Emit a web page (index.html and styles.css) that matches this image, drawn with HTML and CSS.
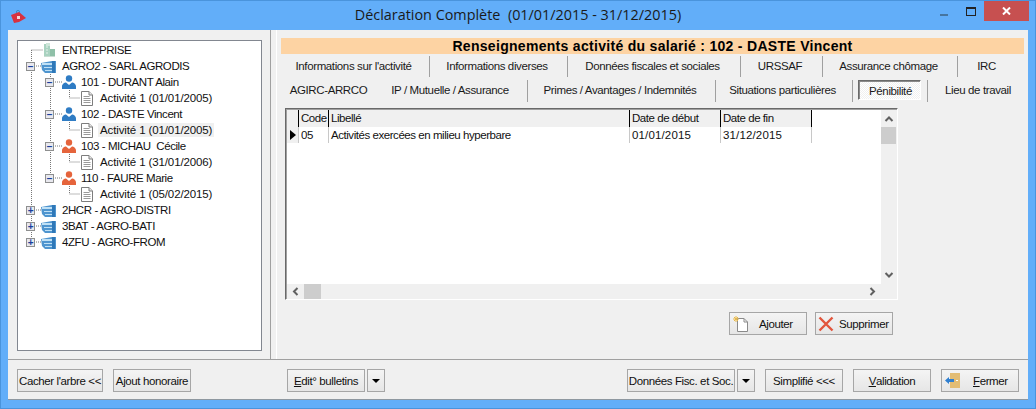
FILE: index.html
```html
<!DOCTYPE html>
<html lang="fr">
<head>
<meta charset="utf-8">
<title>Déclaration Complète</title>
<link rel="stylesheet" href="styles.css">
</head>
<body>
<svg class="defs" width="0" height="0">
  <symbol id="i-building" viewBox="0 0 13 15"><rect x="1" y="1" width="6" height="12" fill="#a9d2c0"/><rect x="3" y="0" width="4" height="3" fill="#cfe6da"/><rect x="7" y="6" width="5" height="8" fill="#8fc0a8"/><rect x="1" y="13" width="11" height="1" fill="#c8ddd2"/><path d="M3 4h2M3 7h2M3 10h2" stroke="#e4f2eb"/></symbol>
  <symbol id="i-company" viewBox="0 0 15 13"><path d="M0 3 L11 1 H15 V13 H4 L1 10Z" fill="#4f95cf"/><path d="M1 3h10v2H1zM3 7h8v1H3zM4 10h7v1H4z" fill="#bfe0f5"/><rect x="11" y="1" width="3" height="12" fill="#2f78b8"/></symbol>
  <symbol id="i-person" viewBox="0 0 14 14"><circle cx="7" cy="3.5" r="3.2"/><path d="M0 14 V11.5 C0 9 2.5 7.5 4 7.5 L7 10 L10 7.5 C11.5 7.5 14 9 14 11.5 V14Z"/></symbol>
  <symbol id="i-doc" viewBox="0 0 12 15"><path d="M.5.5H8L11.5 4V14.5H.5Z" fill="#fff" stroke="#7d7d7d"/><path d="M8 .5V4H11.5" fill="#e8e8e8" stroke="#7d7d7d"/><path d="M2.5 5.5h6M2.5 7.5h7M2.5 9.5h7M2.5 11.5h7" stroke="#9a9a9a"/></symbol>
</svg>
<div class="window">
  <header class="titlebar">
    <svg class="app-icon" width="17" height="15" viewBox="0 0 17 15"><circle cx="8" cy="3" r="1.6" fill="none" stroke="#3a8fc9"/><path d="M1 6 L9 3 L16 9 L9 13 L4 14Z" fill="#d8313f"/><rect x="7" y="7" width="3" height="3" fill="#f6d5d5"/></svg>
    <h1 class="title">Déclaration Complète&nbsp; (01/01/2015 - 31/12/2015)</h1>
    <span class="win-min"></span>
    <span class="win-max"></span>
    <span class="win-close"><svg width="9" height="8" viewBox="0 0 9 8"><path d="M1 .5 L8 7.5 M8 .5 L1 7.5" stroke="#fff" stroke-width="2"/></svg></span>
  </header>
  <div class="client">
    <div class="main">
      <aside class="left">
        <div class="tree">
          <svg class="tree-lines" width="245" height="310" viewBox="0 0 245 310">
            <path d="M13.5 9H25M13.5 9V201M18 25H25M32.5 33V137M37 41H44M37 73H44M37 105H44M37 137H44M51.5 49V57H62M51.5 81V89H62M51.5 113V121H62M51.5 145V153H62M18 169H25M18 185H25M18 201H25" fill="none" stroke="#777" stroke-dasharray="1 1"/>
          </svg>
          <div class="node root"><svg class="ic-building"><use href="#i-building"/></svg><span>ENTREPRISE</span></div>
          <div class="node co"><span class="exp">−</span><svg class="ic-company"><use href="#i-company"/></svg><span>AGRO2 - SARL AGRODIS</span></div>
          <div class="node emp"><span class="exp">−</span><svg class="ic-person blue"><use href="#i-person"/></svg><span>101 - DURANT Alain</span></div>
          <div class="node act"><svg class="ic-doc"><use href="#i-doc"/></svg><span>Activité 1 (01/01/2005)</span></div>
          <div class="node emp"><span class="exp">−</span><svg class="ic-person blue"><use href="#i-person"/></svg><span>102 - DASTE Vincent</span></div>
          <div class="node act"><svg class="ic-doc"><use href="#i-doc"/></svg><span class="sel">Activité 1 (01/01/2005)</span></div>
          <div class="node emp"><span class="exp">−</span><svg class="ic-person orange"><use href="#i-person"/></svg><span>103 - MICHAU&nbsp; Cécile</span></div>
          <div class="node act"><svg class="ic-doc"><use href="#i-doc"/></svg><span>Activité 1 (31/01/2006)</span></div>
          <div class="node emp"><span class="exp">−</span><svg class="ic-person orange"><use href="#i-person"/></svg><span>110 - FAURE Marie</span></div>
          <div class="node act"><svg class="ic-doc"><use href="#i-doc"/></svg><span>Activité 1 (05/02/2015)</span></div>
          <div class="node co"><span class="exp">+</span><svg class="ic-company"><use href="#i-company"/></svg><span>2HCR - AGRO-DISTRI</span></div>
          <div class="node co"><span class="exp">+</span><svg class="ic-company"><use href="#i-company"/></svg><span>3BAT - AGRO-BATI</span></div>
          <div class="node co"><span class="exp">+</span><svg class="ic-company"><use href="#i-company"/></svg><span>4ZFU - AGRO-FROM</span></div>
        </div>
      </aside>
      <div class="splitter"></div>
      <section class="right">
        <h2 class="banner">Renseignements activité du salarié : 102 - DASTE Vincent</h2>
        <nav class="tabs tabs-1">
          <span class="tab sep">Informations sur l'activité</span>
          <span class="tab sep">Informations diverses</span>
          <span class="tab sep">Données fiscales et sociales</span>
          <span class="tab sep">URSSAF</span>
          <span class="tab sep">Assurance chômage</span>
          <span class="tab">IRC</span>
        </nav>
        <nav class="tabs tabs-2">
          <span class="tab first">AGIRC-ARRCO</span>
          <span class="tab sep">IP / Mutuelle / Assurance</span>
          <span class="tab sep">Primes / Avantages / Indemnités</span>
          <span class="tab sep">Situations particulières</span>
          <span class="tab sep"><span class="active">Pénibilité</span></span>
          <span class="tab last">Lieu de travail</span>
        </nav>
        <div class="grid">
          <div class="grid-body">
            <div class="grid-view">
              <div class="row head">
                <span class="c c0"></span><span class="c c1">Code</span><span class="c c2">Libellé</span><span class="c c3">Date de début</span><span class="c c4">Date de fin</span><span class="c c5"></span>
              </div>
              <div class="row data">
                <span class="c c0"><i class="pointer"></i></span><span class="c c1">05</span><span class="c c2">Activités exercées en milieu hyperbare</span><span class="c c3">01/01/2015</span><span class="c c4">31/12/2015</span>
              </div>
            </div>
            <div class="vscroll">
              <svg width="16" height="17" viewBox="0 0 16 17"><path d="M4.5 11 L8 7.5 L11.5 11" fill="none" stroke="#606060" stroke-width="2"/></svg>
              <span class="thumb-v"></span>
              <svg class="push" width="16" height="17" viewBox="0 0 16 17"><path d="M4.5 6 L8 9.5 L11.5 6" fill="none" stroke="#606060" stroke-width="2"/></svg>
            </div>
          </div>
          <div class="hscroll">
            <svg width="17" height="15" viewBox="0 0 17 15"><path d="M10.5 4 L7 7.5 L10.5 11" fill="none" stroke="#606060" stroke-width="2"/></svg>
            <span class="thumb-h"></span>
            <svg class="push-x" width="17" height="15" viewBox="0 0 17 15"><path d="M6.5 4 L10 7.5 L6.5 11" fill="none" stroke="#606060" stroke-width="2"/></svg>
          </div>
        </div>
        <div class="actions">
          <button class="btn w78 has-icon">
            <svg width="17" height="17" viewBox="0 0 17 17"><path d="M5.5 3.5H12L15.5 7V16.5H5.5Z" fill="#fff" stroke="#8a8a8a"/><path d="M12 3.5V7H15.5" fill="none" stroke="#8a8a8a"/><path d="M4 1V7M1 4H7M2 2L6 6M6 2L2 6" stroke="#e9b949"/></svg>
            <span>Ajouter</span>
          </button>
          <button class="btn w78 has-icon del">
            <svg width="16" height="16" viewBox="0 0 16 16"><path d="M1.5 1.5 L14.5 14.5 M14.5 1.5 L1.5 14.5" stroke="#e2553c" stroke-width="2.4"/></svg>
            <span>Supprimer</span>
          </button>
        </div>
      </section>
    </div>
    <footer class="footer">
      <button class="btn w86">Cacher l'arbre &lt;&lt;</button>
      <button class="btn w78 ajout">Ajout honoraire</button>
      <button class="btn w78 edit"><u>E</u>dit° bulletins</button>
      <button class="btn caret-btn"><i class="caret"></i></button>
      <button class="btn w108 donnees">Données Fisc. et Soc.</button>
      <button class="btn caret-btn"><i class="caret"></i></button>
      <button class="btn w78 spaced">Simplifié &lt;&lt;&lt;</button>
      <button class="btn w78 spaced"><u>V</u>alidation</button>
      <button class="btn w78 spaced has-icon fermer">
        <svg width="15" height="15" viewBox="0 0 15 15"><rect x="5" y="0" width="10" height="15" fill="#e3bd74"/><rect x="11" y="7" width="2" height="1" fill="#fff"/><path d="M0 7.5 L4 4 V6 H9 V9 H4 V11Z" fill="#2f7fd0"/></svg>
        <span><u>F</u>ermer</span>
      </button>
    </footer>
  </div>
</div>
</body>
</html>
```
FILE: styles.css
```css
* { box-sizing: border-box; }
html, body { margin: 0; padding: 0; }
body {
  width: 1036px;
  height: 409px;
  overflow: hidden;
  font-family: "Liberation Sans", Arial, sans-serif;
  font-size: 11.5px;
  letter-spacing: -.38px;
  color: #000;
}
.defs { position: absolute; }
.window {
  width: 1036px;
  height: 409px;
  display: flex;
  flex-direction: column;
  background: #62aef9;
  border: 1px solid #4a94dc;
  padding: 0 7px 8px;
}
.titlebar {
  height: 29px;
  flex: none;
  display: flex;
  align-items: flex-start;
  position: relative;
}
.app-icon { margin: 8px 0 0 2px; flex: none; }
.title {
  position: absolute;
  left: 0;
  right: 0;
  top: 4px;
  margin: 0;
  text-align: center;
  font-family: "Open Sans", sans-serif;
  font-weight: 400;
  font-size: 14.4px;
  letter-spacing: 0;
  line-height: 20px;
  color: #1a1a1a;
  pointer-events: none;
}
.win-min { position: absolute; left: 932px; top: 13px; width: 8px; height: 2px; background: #46759f; }
.win-max { position: absolute; left: 958px; top: 6px; width: 10px; height: 9px; border: 1px solid #222; border-top-width: 2px; }
.win-close {
  position: absolute;
  left: 976px;
  top: 0;
  width: 45px;
  height: 20px;
  background: #c75050;
  display: flex;
  align-items: center;
  justify-content: center;
}
.client {
  flex: 1;
  min-height: 0;
  display: flex;
  flex-direction: column;
  background: #f0f0f0;
  border-bottom: 1px solid #8f98a0;
}
.main { height: 330px; flex: none; display: flex; border-bottom: 1px solid #a0a0a0; }
.left { width: 262px; flex: none; padding: 10px 0 8px 9px; }
.splitter {
  width: 7px;
  flex: none;
  background: #f0f0f0;
  border-left: 1px solid #a0a0a0;
  border-right: 1px solid #fff;
}
.tree {
  position: relative;
  width: 245px;
  height: 311px;
  background: #fff;
  border: 1px solid #828790;
  padding-top: 1px;
}
.tree-lines { position: absolute; left: 0; top: 0; }
.node {
  position: relative;
  display: flex;
  align-items: center;
  height: 16px;
  white-space: nowrap;
  color: #111;
  letter-spacing: -.42px;
}
.node svg { flex: none; }
.exp {
  flex: none;
  width: 9px;
  height: 9px;
  border: 1px solid #8e8f8f;
  background: #e8e8ee;
  color: #1a3f9c;
  font-size: 10px;
  font-weight: 700;
  line-height: 7px;
  text-align: center;
  overflow: hidden;
}
.root { padding-left: 25px; }
.root svg { margin-right: 6px; }
.ic-building { width: 13px; height: 15px; }
.co { padding-left: 8px; }
.co svg { margin: 0 6px; }
.ic-company { width: 15px; height: 13px; }
.emp { padding-left: 27px; }
.emp svg { margin: 0 5px 0 8px; }
.ic-person { width: 14px; height: 14px; }
.blue { fill: #2f7cc4; }
.orange { fill: #e5643c; }
.act { padding-left: 63px; letter-spacing: -.12px; }
.act svg { margin-right: 7px; width: 12px; height: 15px; }
.sel { background: #f0f0f0; margin-left: -2px; padding: 1px 2px; }

.right { flex: 1; min-width: 0; padding: 8px 4px 0 4px; }
.banner {
  margin: 0;
  height: 16px;
  background: #fdd3a3;
  text-align: center;
  font-size: 14px;
  line-height: 16px;
  font-weight: 700;
  letter-spacing: .3px;
}
.tabs { display: grid; height: 21px; white-space: nowrap; color: #1a1a1a; }
.tabs-1 { margin-top: 2px; grid-template-columns: 149px 138px 173px 82px 135px 60px; }
.tabs-2 { margin-top: 3px; grid-template-columns: 95px 152px 188px 137px 75px 92px; }
.tab { display: flex; align-items: center; justify-content: center; padding: 0 3px 2px 0; }
.tab.first { padding-right: 0; }
.tab.last { padding: 0 0 2px 8px; }
.sep { border-right: 1px solid #a0a0a0; }
.active {
  width: 63px;
  height: 20px;
  flex: none;
  align-self: flex-start;
  display: flex;
  align-items: center;
  justify-content: center;
  margin: 0 0 0 2px;
  padding: 1px 0 0 2px;
  border: 1px solid;
  border-color: #6a6a6a #fff #fff #6a6a6a;
  box-shadow: inset 1px 1px 0 #8a8a8a;
  background: repeating-conic-gradient(#fff 0 25%, #f0f0f0 0 50%) 0 0 / 2px 2px;
}
.grid {
  width: 613px;
  height: 192px;
  margin: 7px 0 0 4px;
  display: flex;
  flex-direction: column;
  border: 1px solid;
  border-color: #696969 #fff #fff #696969;
  box-shadow: inset 1px 1px 0 #a0a0a0;
  padding: 1px 0 0 1px;
  letter-spacing: -.45px;
}
.grid-body { flex: 1; min-height: 0; display: flex; }
.grid-view { flex: 1; min-width: 0; background: #fff; overflow: hidden; }
.row { display: flex; height: 17px; white-space: nowrap; }
.head { background: #f0f0f0; }
.data { height: 16px; }
.c { display: flex; align-items: center; flex: none; padding: 0 0 1px 2px; border-right: 1px solid #000; color: #111; }
.data .c { border-right-color: #c8c8c8; }
.data .c3, .data .c4 { letter-spacing: .15px; }
.c0 { width: 12px; padding: 0; background: #f0f0f0; }
.c1 { width: 30px; }
.c2 { width: 301px; }
.c3 { width: 91px; }
.c4 { width: 91px; }
.c5 { flex: 1; border-right: 0; background: #fff; }
.pointer {
  display: block;
  margin-left: 3px;
  width: 0;
  height: 0;
  border-left: 6px solid #000;
  border-top: 5px solid transparent;
  border-bottom: 5px solid transparent;
}
.vscroll { width: 16px; flex: none; background: #f0f0f0; display: flex; flex-direction: column; }
.thumb-v { height: 17px; background: #cdcdcd; flex: none; margin-right: 1px; }
.push { margin-top: auto; flex: none; }
.push-x { margin-left: auto; flex: none; }
.hscroll { height: 15px; flex: none; background: #f0f0f0; display: flex; padding-right: 16px; }
.thumb-h { width: 17px; background: #cdcdcd; flex: none; }

.actions { display: flex; gap: 8px; margin: 12px 0 0 448px; }
.btn {
  height: 23px;
  flex: none;
  padding: 0;
  margin: 0;
  font: inherit;
  letter-spacing: inherit;
  color: #111;
  white-space: nowrap;
  border: 1px solid #a6a6a6;
  background: linear-gradient(#f4f4f4, #e6e6e6);
  display: inline-flex;
  align-items: center;
  justify-content: center;
}
.w78 { width: 78px; }
.w86 { width: 86px; }
.w108 { width: 108px; }
.has-icon { justify-content: flex-start; padding-left: 2px; }
.has-icon span { margin-left: 10px; }
.has-icon.del span { margin-left: 5px; }
.footer { flex: 1; display: flex; align-items: flex-start; padding: 9px 0 0 9px; }
.footer .btn.ajout { margin-left: 10px; }
.footer .btn.edit { margin-left: 96px; }
.footer .btn.caret-btn { width: 18px; margin-left: 2px; }
.footer .btn.donnees { margin-left: 242px; }
.footer .btn.spaced { margin-left: 10px; }
.caret { width: 0; height: 0; border-top: 4px solid #000; border-left: 4px solid transparent; border-right: 4px solid transparent; }
.has-icon.fermer { padding-left: 3px; }
.has-icon.fermer span { margin-left: 13px; }
```
